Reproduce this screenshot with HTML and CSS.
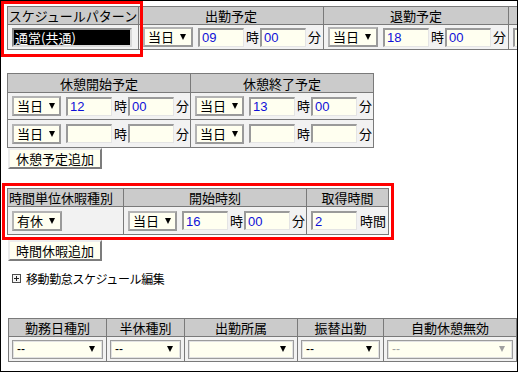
FILE: index.html
```html
<!DOCTYPE html>
<html>
<head>
    <meta charset="utf-8">
    <title>勤務時間変更</title>
    <link rel="stylesheet" href="styles.css">
</head>
<body>
<div class="frame">
    <div class="mark mark-pattern"></div>
    <div class="mark mark-leave"></div>

    <div class="grid grid-top">
        <div class="h">スケジュールパターン</div>
        <div class="h">出勤予定</div>
        <div class="h">退勤予定</div>
        <div class="h"></div>
        <div class="c"><span class="pattern">通常(共通)</span></div>
        <div class="c">
            <span class="sel">当日<i class="arr"></i></span>
            <input class="num" type="text" value="09">
            <span class="u">時</span>
            <input class="num" type="text" value="00">
            <span class="u">分</span>
        </div>
        <div class="c">
            <span class="sel">当日<i class="arr"></i></span>
            <input class="num" type="text" value="18">
            <span class="u">時</span>
            <input class="num" type="text" value="00">
            <span class="u">分</span>
        </div>
        <div class="c"><input class="num" type="text" value=""></div>
    </div>

    <div class="grid grid-rest">
        <div class="h">休憩開始予定</div>
        <div class="h">休憩終了予定</div>
        <div class="c">
            <span class="sel">当日<i class="arr"></i></span>
            <input class="num" type="text" value="12">
            <span class="u">時</span>
            <input class="num" type="text" value="00">
            <span class="u">分</span>
        </div>
        <div class="c">
            <span class="sel">当日<i class="arr"></i></span>
            <input class="num" type="text" value="13">
            <span class="u">時</span>
            <input class="num" type="text" value="00">
            <span class="u">分</span>
        </div>
        <div class="c">
            <span class="sel">当日<i class="arr"></i></span>
            <input class="num" type="text" value="">
            <span class="u">時</span>
            <input class="num" type="text" value="">
            <span class="u">分</span>
        </div>
        <div class="c">
            <span class="sel">当日<i class="arr"></i></span>
            <input class="num" type="text" value="">
            <span class="u">時</span>
            <input class="num" type="text" value="">
            <span class="u">分</span>
        </div>
    </div>
    <button class="btn btn-rest" type="button">休憩予定追加</button>

    <div class="grid grid-leave">
        <div class="h h-left">時間単位休暇種別</div>
        <div class="h">開始時刻</div>
        <div class="h">取得時間</div>
        <div class="c"><span class="sel">有休<i class="arr"></i></span></div>
        <div class="c">
            <span class="sel">当日<i class="arr"></i></span>
            <input class="num" type="text" value="16">
            <span class="u">時</span>
            <input class="num" type="text" value="00">
            <span class="u">分</span>
        </div>
        <div class="c">
            <input class="num" type="text" value="2">
            <span class="u u-hours">時間</span>
        </div>
    </div>
    <button class="btn btn-leave" type="button">時間休暇追加</button>

    <div class="toggle">
        <svg class="toggle-icon" width="9" height="9" viewBox="0 0 9 9">
            <rect x="0.5" y="0.5" width="8" height="8" fill="#f4f4f4" stroke="#4d4d4d"/>
            <path d="M2 4.5h5M4.5 2v5" stroke="#222" stroke-width="1"/>
        </svg>
        <span>移動勤怠スケジュール編集</span>
    </div>

    <div class="grid grid-kind">
        <div class="h">勤務日種別</div>
        <div class="h">半休種別</div>
        <div class="h">出勤所属</div>
        <div class="h">振替出勤</div>
        <div class="h">自動休憩無効</div>
        <div class="c c-list"><span class="drop">--<i class="arr"></i></span></div>
        <div class="c c-list"><span class="drop">--<i class="arr"></i></span></div>
        <div class="c c-list"><span class="drop"><i class="arr"></i></span></div>
        <div class="c c-list"><span class="drop">--<i class="arr"></i></span></div>
        <div class="c c-list"><span class="drop drop-off">--<i class="arr"></i></span></div>
    </div>
</div>
</body>
</html>
```

FILE: styles.css
```css
body {
    margin: 0;
    background: #fff;
    color: #000;
    font-family: "Noto Sans CJK JP", "Noto Sans CJK SC", sans-serif;
    font-size: 13px;
}

.frame {
    position: relative;
    width: 518px;
    height: 372px;
    box-sizing: border-box;
    border: 1px solid #000;
    overflow: hidden;
    padding: 5px 0 0 6px;
}

/* red highlight boxes */
.mark {
    position: absolute;
    box-sizing: border-box;
    border: 3px solid #f00;
    z-index: 5;
}

.mark-pattern {
    left: 0;
    top: 0;
    width: 142px;
    height: 56px;
}

.mark-leave {
    left: 1px;
    top: 182px;
    width: 392px;
    height: 57px;
}

/* tables */
.grid {
    display: grid;
    width: max-content;
    border-top: 1px solid #7a7a7a;
    border-left: 1px solid #7a7a7a;
}

.grid > div {
    box-sizing: border-box;
    border-right: 1px solid #7a7a7a;
    border-bottom: 1px solid #7a7a7a;
}

.h {
    display: flex;
    align-items: center;
    justify-content: center;
    background: #cbcbcb;
    line-height: 15px;
    white-space: nowrap;
}

.h-left {
    justify-content: flex-start;
    padding-left: 1px;
}

.c {
    display: flex;
    align-items: center;
    padding-left: 4px;
    background: #f2f2f2;
    white-space: nowrap;
}

.grid-top {
    grid-template-columns: 131px 185px 185px 80px;
    grid-template-rows: 18px 25px;
}

.grid-rest {
    margin-top: 23px;
    grid-template-columns: 183px 183px;
    grid-template-rows: 19px 27px 28px;
}

.grid-leave {
    margin-top: 19px;
    grid-template-columns: 116px 183px 82px;
    grid-template-rows: 18px 28px;
}

.grid-kind {
    margin: 32px 0 0 1px;
    grid-template-columns: 98px 78px 113px 86px 133px;
    grid-template-rows: 18px 25px;
}

/* form parts */
.pattern {
    box-sizing: border-box;
    width: 120px;
    height: 19px;
    padding-left: 1px;
    line-height: 15px;
    background: #000;
    color: #fff;
    border-top: 2px solid #8a8a8a;
    border-left: 2px solid #8a8a8a;
    border-right: 2px solid #d8d8d8;
    border-bottom: 2px solid #d8d8d8;
}

.sel {
    display: flex;
    align-items: center;
    box-sizing: border-box;
    width: 50px;
    height: 20px;
    padding-left: 3px;
    margin-right: 5px;
    background: #fffff0;
    border: 2px solid #b4b4b4;
    border-right-color: #9a9a9a;
    border-bottom-color: #9a9a9a;
    line-height: 16px;
}

.arr {
    display: block;
    width: 0;
    height: 0;
    margin-left: 6px;
    border-left: 3.5px solid transparent;
    border-right: 3.5px solid transparent;
    border-top: 6px solid #000;
}

.num {
    box-sizing: border-box;
    width: 46px;
    height: 19px;
    margin: 0;
    padding: 0 0 0 2px;
    background: #fffff0;
    color: #1010d8;
    font-family: "Liberation Sans", Arial, sans-serif;
    font-size: 13px;
    border-top: 2px solid #9a9a9a;
    border-left: 2px solid #9a9a9a;
    border-right: 1px solid #e4e4e4;
    border-bottom: 1px solid #e4e4e4;
    outline: none;
}

.u {
    width: 13px;
    margin: 0 1px 0 2px;
    line-height: 16px;
}

.u-hours {
    width: auto;
    margin-left: 3px;
}

.btn {
    display: block;
    box-sizing: border-box;
    width: 94px;
    height: 21px;
    margin: 0 0 0 1px;
    padding: 0;
    background: #fffff0;
    color: #000;
    font-family: inherit;
    font-size: 13px;
    line-height: 16px;
    border: 2px solid;
    border-color: #ececec #7c7c7c #7c7c7c #ececec;
}

.btn-leave {
    margin-top: 5px;
}

.toggle {
    display: flex;
    align-items: center;
    height: 16px;
    margin: 9px 0 0 5px;
    font-size: 12px;
    letter-spacing: -0.4px;
}

.toggle-icon {
    display: block;
    margin-right: 5px;
}

.c-list {
    padding: 0 3px;
}

.drop {
    display: flex;
    align-items: center;
    justify-content: space-between;
    box-sizing: border-box;
    width: 100%;
    height: 19px;
    padding: 0 7px 0 4px;
    background: #fffff0;
    border: 1px solid #9c9c9c;
    box-shadow: inset 1px 1px 0 #e2e2e2, inset -1px -1px 0 #e2e2e2;
    font-family: "Liberation Sans", Arial, sans-serif;
    font-size: 12px;
    line-height: 14px;
}

.drop .arr {
    margin-left: auto;
}

.drop-off {
    color: #a0a0a0;
}

.drop-off .arr {
    border-top-color: #a0a0a0;
}
```
